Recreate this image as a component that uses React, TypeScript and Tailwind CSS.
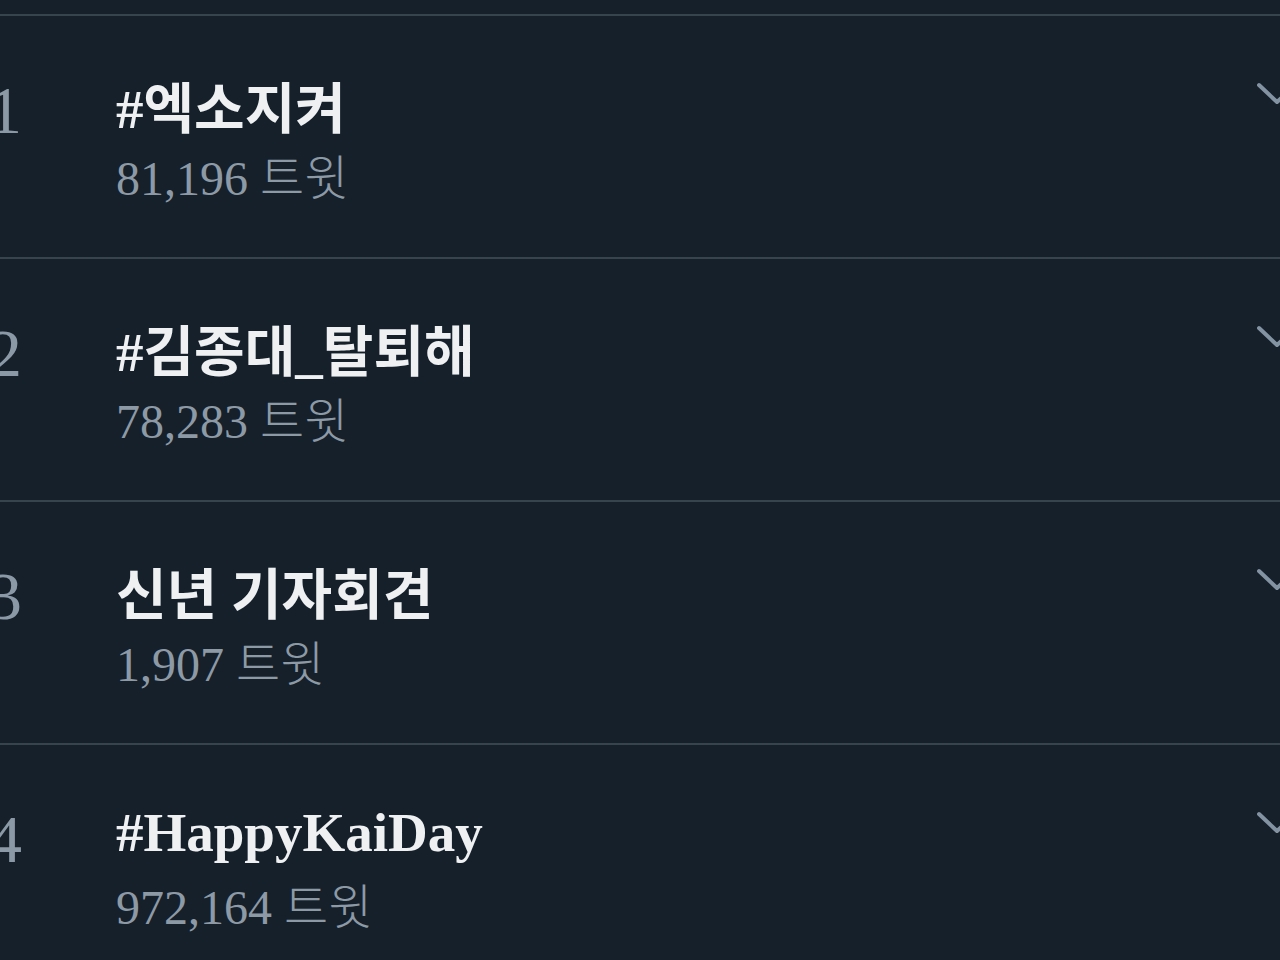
import React from "react";

type Trend = { rank: string; title: string; count: string };

const trends: Trend[] = [
  { rank: "1", title: "#엑소지켜", count: "81,196" },
  { rank: "2", title: "#김종대_탈퇴해", count: "78,283" },
  { rank: "3", title: "신년 기자회견", count: "1,907" },
  { rank: "4", title: "#HappyKaiDay", count: "972,164" },
];

function splitRuns(text: string) {
  const runs: { ko: boolean; t: string }[] = [];
  for (const ch of text) {
    const ko = /[\uac00-\ud7a3]/.test(ch);
    const last = runs[runs.length - 1];
    if (last && last.ko === ko) last.t += ch;
    else runs.push({ ko, t: ch });
  }
  return runs;
}

function Title({ text }: { text: string }) {
  return (
    <div className="h-[62px] leading-[62px] whitespace-nowrap text-[#eef0f2]">
      {splitRuns(text).map((r, i) =>
        r.ko ? (
          <span
            key={i}
            className="text-[55px] font-bold"
            style={{ fontFamily: '"Noto Sans CJK KR", sans-serif' }}
          >
            {r.t}
          </span>
        ) : (
          <span
            key={i}
            className="text-[55px] font-bold"
            style={{ fontFamily: '"Liberation Serif", serif' }}
          >
            {r.t}
          </span>
        )
      )}
    </div>
  );
}

function Chevron() {
  return (
    <svg width="46" height="26" viewBox="0 0 46 26" className="shrink-0">
      <path
        d="M3 3 L21 20 L39 3"
        fill="none"
        stroke="#8393a1"
        strokeWidth="4"
        strokeLinecap="round"
        strokeLinejoin="round"
      />
    </svg>
  );
}

export default function App() {
  return (
    <div className="w-[1280px] h-[960px] overflow-hidden bg-[#15202b]">
      <div className="h-[14px]" />
      {trends.map((t) => (
        <div
          key={t.rank}
          className="h-[243px] border-t-2 border-[#37444e] flex items-start"
        >
          <div
            className="w-[128px] ml-[-12px] shrink-0 pt-[60px] text-[68px] leading-[68px] text-[#8b98a5]"
            style={{ fontFamily: '"Liberation Serif", serif' }}
          >
            {t.rank}
          </div>
          <div className="flex-1 pt-[57px]">
            <Title text={t.title} />
            <div
              className="mt-[11px] h-[56px] leading-[56px] whitespace-nowrap text-[#8d9aa6]"
              style={{ fontFamily: '"Liberation Serif", serif' }}
            >
              <span className="text-[48px]">{t.count} </span>
              <span
                className="text-[48px] font-light"
                style={{ fontFamily: '"Noto Sans CJK KR", sans-serif' }}
              >
                트윗
              </span>
            </div>
          </div>
          <div className="mr-[-22px] mt-[66px]">
            <Chevron />
          </div>
        </div>
      ))}
    </div>
  );
}
